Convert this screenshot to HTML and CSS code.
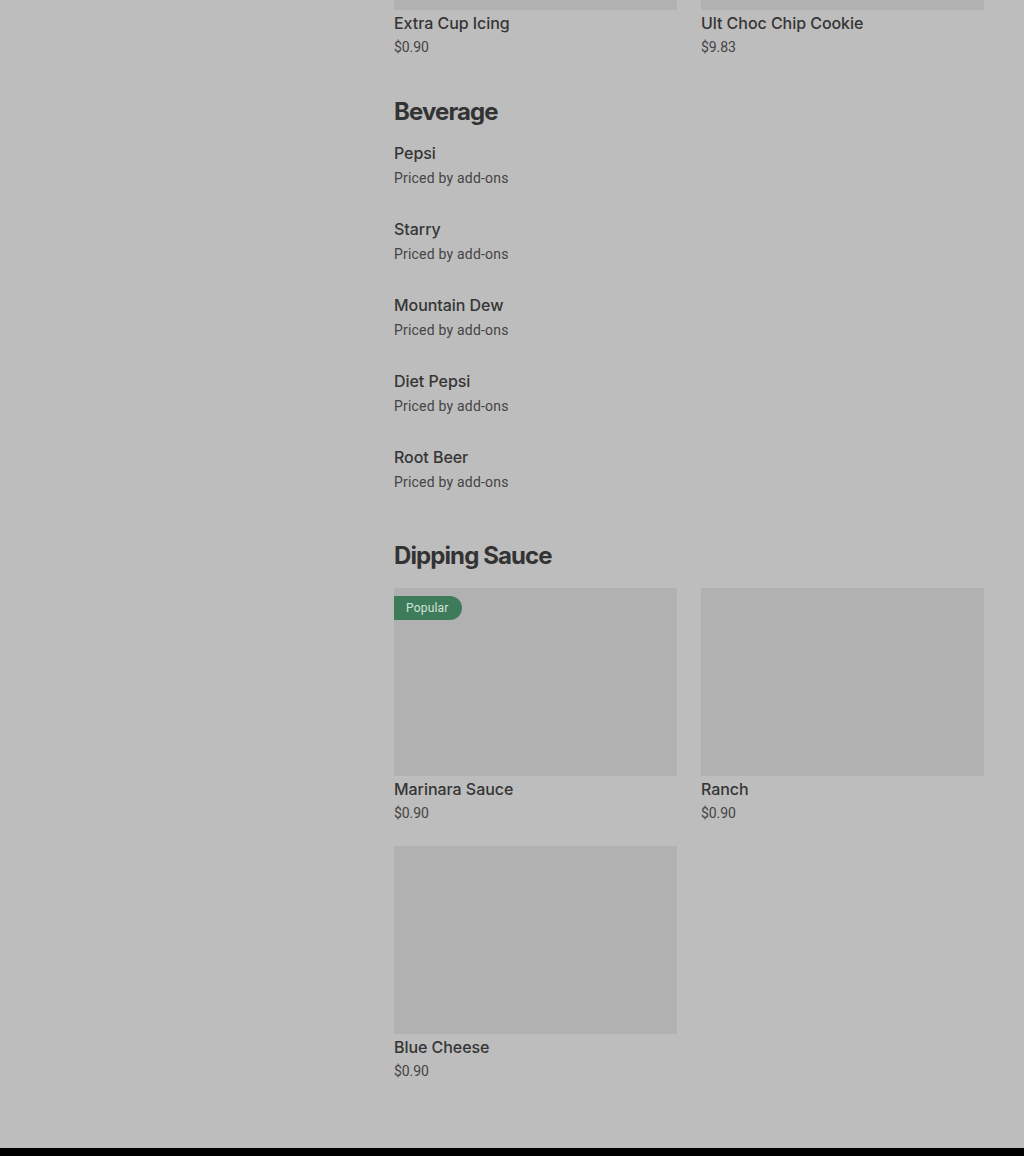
FILE: index.html
```html
<!DOCTYPE html>
<html>
<head>
<meta charset="utf-8">
<link rel="stylesheet" href="styles.css">
</head>
<body>
<div class="page">
  <main class="menu">
    <section class="grid top-grid">
      <div class="card">
        <div class="thumb thumb-stub"></div>
        <div class="title">Extra Cup Icing</div>
        <div class="price">$0.90</div>
      </div>
      <div class="card">
        <div class="thumb thumb-stub"></div>
        <div class="title">Ult Choc Chip Cookie</div>
        <div class="price">$9.83</div>
      </div>
    </section>

    <section class="section">
      <h2 class="heading">Beverage</h2>
      <ul class="list">
        <li class="row"><div class="title">Pepsi</div><div class="price">Priced by add-ons</div></li>
        <li class="row"><div class="title">Starry</div><div class="price">Priced by add-ons</div></li>
        <li class="row"><div class="title">Mountain Dew</div><div class="price">Priced by add-ons</div></li>
        <li class="row"><div class="title">Diet Pepsi</div><div class="price">Priced by add-ons</div></li>
        <li class="row"><div class="title">Root Beer</div><div class="price">Priced by add-ons</div></li>
      </ul>
    </section>

    <section class="section section-sauce">
      <h2 class="heading">Dipping Sauce</h2>
      <div class="grid">
        <div class="card">
          <div class="thumb"><span class="badge">Popular</span></div>
          <div class="title">Marinara Sauce</div>
          <div class="price">$0.90</div>
        </div>
        <div class="card">
          <div class="thumb"></div>
          <div class="title">Ranch</div>
          <div class="price">$0.90</div>
        </div>
        <div class="card">
          <div class="thumb"></div>
          <div class="title">Blue Cheese</div>
          <div class="price">$0.90</div>
        </div>
      </div>
    </section>
  </main>
  <footer class="footer"></footer>
</div>
</body>
</html>
```

FILE: styles.css
```css
* { box-sizing: border-box; }
html, body {
  margin: 0;
  padding: 0;
  background: #bdbdbd;
}
body {
  font-family: Inter, "Liberation Sans", sans-serif;
  color: #333;
}
.page {
  min-height: 1156px;
  display: flex;
  flex-direction: column;
}
.menu {
  width: 590px;
  margin-left: 394px;
  padding-bottom: 66px;
}
.grid {
  display: grid;
  grid-template-columns: 283px 283px;
  column-gap: 24px;
  row-gap: 22px;
}
.card {
  display: flex;
  flex-direction: column;
}
.thumb {
  position: relative;
  height: 188px;
  background: #b1b1b1;
  margin-bottom: 1px;
}
.thumb-stub {
  height: 10px;
}
.title {
  font-family: Inter, "Liberation Sans", sans-serif;
  font-size: 16px;
  font-weight: 500;
  line-height: 24px;
  color: #353535;
  letter-spacing: -0.05px;
}
.price {
  margin-top: 1px;
  font-family: Roboto, "Liberation Sans", sans-serif;
  font-size: 14px;
  line-height: 22px;
  color: #444;
  letter-spacing: -0.1px;
}
.row .price {
  line-height: 24px;
  letter-spacing: 0.2px;
}
.section {
  margin-top: 38px;
}
.section-sauce {
  margin-top: 46px;
}
.heading {
  margin: 0 0 13px;
  font-family: Inter, "Liberation Sans", sans-serif;
  font-size: 24px;
  font-weight: 700;
  line-height: 32px;
  letter-spacing: -0.9px;
  color: #333;
}
.section-sauce .heading {
  margin-bottom: 16px;
}
.list {
  list-style: none;
  margin: 0;
  padding: 0;
  display: flex;
  flex-direction: column;
  gap: 27px;
}
.badge {
  position: absolute;
  top: 8px;
  left: 0;
  height: 24px;
  padding: 0 13px 0 12px;
  border-radius: 0 12px 12px 0;
  background: #3e7b5b;
  color: #d2e2d8;
  font-family: Roboto, "Liberation Sans", sans-serif;
  font-size: 12px;
  line-height: 24px;
  letter-spacing: 0.2px;
}
.footer {
  margin-top: auto;
  height: 8px;
  background: #000;
}
```
